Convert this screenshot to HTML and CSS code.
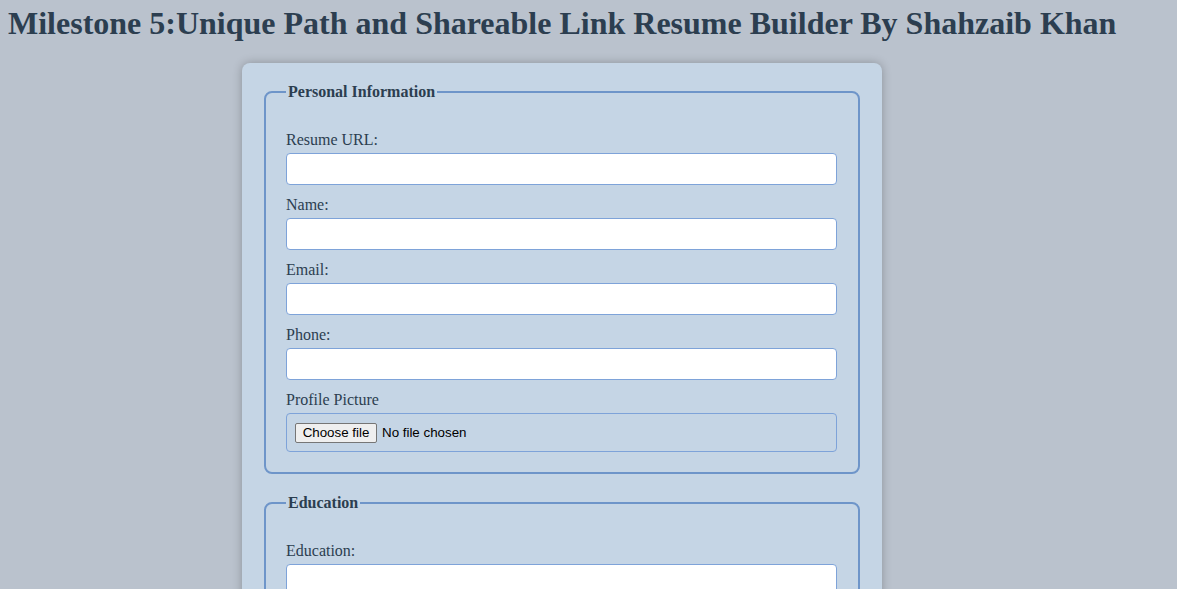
FILE: index.html
```html
<!DOCTYPE html>
<html>
<head>
<meta charset="utf-8">
<title>Resume Builder</title>
<link rel="stylesheet" href="styles.css">
</head>
<body>
<h1 class="title">Milestone 5:Unique Path and Shareable Link Resume Builder By Shahzaib Khan</h1>
<div class="container">
  <form class="form">
    <fieldset class="group">
      <legend class="legend">Personal Information</legend>
      <label class="label" for="url">Resume URL:</label>
      <input class="field" type="text" id="url">
      <label class="label" for="name">Name:</label>
      <input class="field" type="text" id="name">
      <label class="label" for="email">Email:</label>
      <input class="field" type="email" id="email">
      <label class="label" for="phone">Phone:</label>
      <input class="field" type="tel" id="phone">
      <label class="label" for="pic">Profile Picture</label>
      <div class="file-box">
        <input class="file-hidden" type="file" id="pic">
        <label class="file-btn" for="pic">Choose file</label>
        <span class="file-name">No file chosen</span>
      </div>
    </fieldset>
    <fieldset class="group">
      <legend class="legend">Education</legend>
      <label class="label" for="edu">Education:</label>
      <input class="field" type="text" id="edu">
      <label class="label" for="edu2">Institution:</label>
      <input class="field" type="text" id="edu2">
    </fieldset>
  </form>
</div>
</body>
</html>
```
FILE: styles.css
```css
html, body {
  background: #bac2cd;
}
body {
  margin: 8px;
  font-family: "Liberation Serif", "Times New Roman", serif;
  color: #2c3e50;
}
.title {
  margin: 0;
  font-size: 32px;
  line-height: 30px;
  font-weight: bold;
  color: #2c3e50;
}
.container {
  width: 640px;
  box-sizing: border-box;
  margin: 25px 0 0 234px;
  padding: 20px;
  background: #c5d5e5;
  border-radius: 8px;
  box-shadow: 0 0 10px rgba(0, 0, 0, 0.25);
}
.form {
  margin: 0;
}
.group {
  margin: 0 2px 20px;
  padding: 0 21px 20px 20px;
  border: 2px solid #6e95c9;
  border-radius: 8px;
}
.legend {
  font-size: 16px;
  font-weight: bold;
  color: #2c3e50;
  padding: 0 2px;
  margin-bottom: 19px;
}
.label {
  display: block;
  margin: 11px 0 4px;
  font-size: 16px;
  line-height: 18px;
  color: #2c3e50;
}
.field {
  display: block;
  width: 100%;
  box-sizing: border-box;
  height: 32px;
  padding: 8px;
  border: 1px solid #7ea3d9;
  border-radius: 4px;
  background: #ffffff;
  font-family: "Liberation Sans", Arial, sans-serif;
  font-size: 13.33px;
}
.file-box {
  display: flex;
  align-items: center;
  gap: 5px;
  height: 39px;
  box-sizing: border-box;
  padding: 0 8px;
  border: 1px solid #7ea3d9;
  border-radius: 4px;
  font-family: "Liberation Sans", Arial, sans-serif;
  font-size: 13.33px;
  color: #000;
}
.file-hidden {
  display: none;
}
.file-btn {
  display: inline-flex;
  align-items: center;
  justify-content: center;
  width: 82px;
  height: 20px;
  box-sizing: border-box;
  border: 1px solid #767676;
  border-radius: 2px;
  background: #efefef;
  color: #000;
}
.file-name {
  color: #000;
}
```
